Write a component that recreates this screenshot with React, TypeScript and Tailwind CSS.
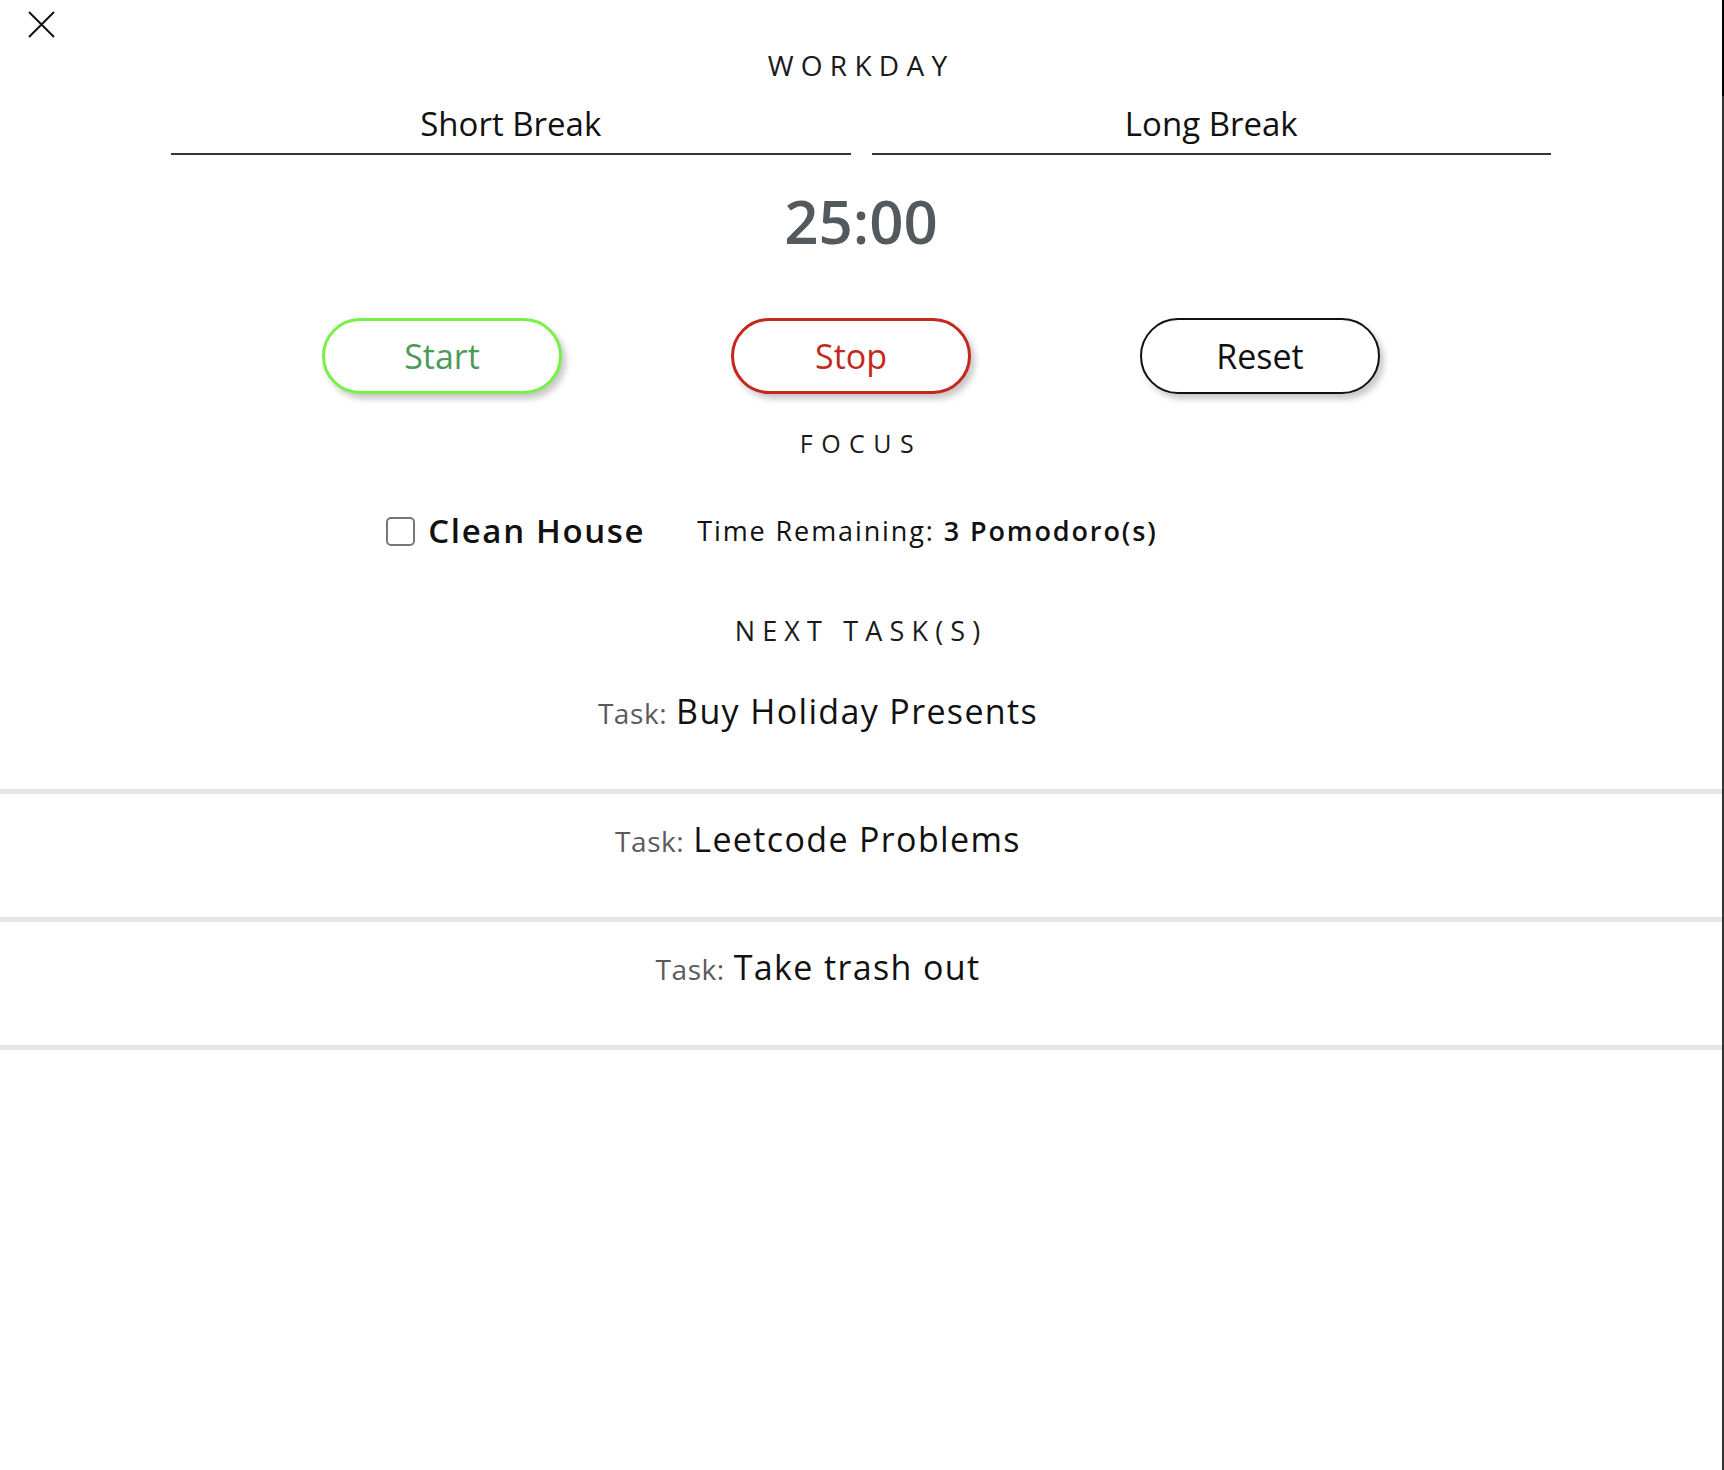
import { useState } from 'react';

type Task = { id: number; name: string };

const nextTasks: Task[] = [
  { id: 1, name: 'Buy Holiday Presents' },
  { id: 2, name: 'Leetcode Problems' },
  { id: 3, name: 'Take trash out' },
];

const CloseIcon = () => (
  <svg width="27" height="27" viewBox="0 0 27 27" fill="none" stroke="#111" strokeWidth="2">
    <path d="M1 1L26 26M26 1L1 26" />
  </svg>
);

export default function App() {
  const [mode, setMode] = useState<'short' | 'long'>('short');
  const [done, setDone] = useState(false);

  return (
    <div className="flex w-[1724px] h-[1470px] font-['Open_Sans','Noto_Sans',sans-serif] text-[#111]">
      <div className="relative w-[1722px] h-full bg-white">
        {/* close */}
        <button className="absolute left-[28px] top-[11px] w-[27px] h-[27px]">
          <CloseIcon />
        </button>

        <h2 className="pt-[45px] h-[85px] text-center text-[28px] leading-[40px] tracking-[0.26em] text-[#1a1a1a]">
          WORKDAY
        </h2>

        {/* tabs */}
        <div className="w-[1380px] mx-auto grid grid-cols-2 gap-[21px]">
          <button
            onClick={() => setMode('short')}
            className="pt-[19px] pb-[9px] text-[33px] leading-[40px] border-b-2 border-[#2d3748]"
          >
            Short Break
          </button>
          <button
            onClick={() => setMode('long')}
            className="pt-[19px] pb-[9px] text-[33px] leading-[40px] border-b-2 border-[#2d3748]"
          >
            Long Break
          </button>
        </div>

        <div className="mt-[31px] text-center text-[60px] leading-[70px] font-semibold text-[#54595e]">
          {mode === 'short' || mode === 'long' ? '25:00' : ''}
        </div>

        {/* controls */}
        <div className="mt-[62px] flex justify-center gap-[169px] pr-[20px]">
          <button className="w-[240px] h-[76px] rounded-full border-[3px] border-[#78f048] text-[#4c9a58] text-[34px] bg-white shadow-[4px_5px_6px_rgba(0,0,0,0.22)]">
            Start
          </button>
          <button className="w-[240px] h-[76px] rounded-full border-[3px] border-[#c4281c] text-[#c4281c] text-[34px] bg-white shadow-[4px_5px_6px_rgba(0,0,0,0.22)]">
            Stop
          </button>
          <button className="w-[240px] h-[76px] rounded-full border-2 border-[#111] text-[#111] text-[34px] bg-white shadow-[4px_5px_6px_rgba(0,0,0,0.22)]">
            Reset
          </button>
        </div>

        <h3 className="mt-[31px] h-[36px] text-center text-[25px] leading-[36px] tracking-[0.34em] text-[#1a1a1a]">
          FOCUS
        </h3>

        <div className="mt-[50px] h-[40px] flex items-center justify-center pr-[178px]">
          <label className="flex items-center gap-[13px]">
            <input
              type="checkbox"
              checked={done}
              onChange={() => setDone(!done)}
              className="appearance-none w-[29px] h-[29px] border-2 border-[#767676] rounded-[5px] bg-white"
            />
            <span className="text-[33px] leading-[40px] font-semibold tracking-[0.05em]">Clean House</span>
          </label>
          <span className="ml-[52px] text-[27px] leading-[40px] tracking-[0.07em]">
            Time Remaining: <span className="font-semibold">3 Pomodoro(s)</span>
          </span>
        </div>

        <h3 className="mt-[60px] h-[40px] text-center text-[27px] leading-[40px] tracking-[0.265em] text-[#1a1a1a]">
          NEXT TASK(S)
        </h3>

        <ul className="mt-[15px]">
          {nextTasks.map((task) => (
            <li
              key={task.id}
              className="h-[128px] pt-[20px] border-b-[5px] border-[#e6e6e6] pr-[86px] flex justify-center items-baseline"
            >
              <span className="text-[28px] leading-[50px] text-[#5a5a5a] tracking-[0.02em] mr-[9px]">Task:</span>
              <span className="text-[34px] leading-[50px] tracking-[0.04em]">{task.name}</span>
            </li>
          ))}
        </ul>
      </div>

      {/* backdrop edge */}
      <div className="w-[2px] h-full flex flex-col">
        <div className="h-[96px] bg-black" />
        <div className="flex-1 bg-[#333]" />
      </div>
    </div>
  );
}
